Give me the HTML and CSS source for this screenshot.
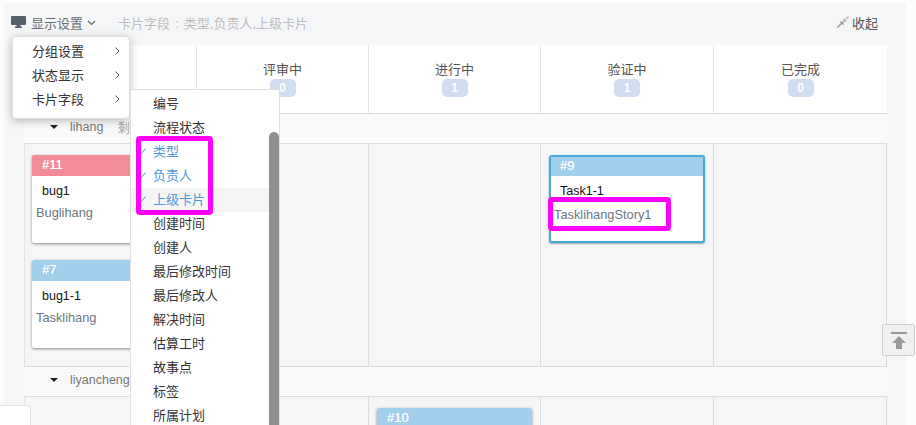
FILE: index.html
```html
<!DOCTYPE html>
<html lang="zh">
<head>
<meta charset="utf-8">
<title>看板</title>
<link rel="stylesheet" href="styles.css">
</head>
<body>
<div class="page">
  <div class="toolbar">
    <svg class="ico-monitor" width="15" height="12" viewBox="0 0 15 12"><path fill="#56616d" d="M1 0h13a1 1 0 0 1 1 1v7a1 1 0 0 1-1 1H9.500v1.500H11V12H4v-1.500h1.500V9H1a1 1 0 0 1-1-1V1a1 1 0 0 1 1-1z"/></svg>
    <span class="display">显示设置</span>
    <svg class="ico-down" width="9" height="6" viewBox="0 0 9 6"><path fill="none" stroke="#666" stroke-width="1.200" d="M1 1l3.500 3.500L8 1"/></svg>
    <span class="summary">卡片字段 : 类型,负责人,上级卡片</span>
    <span class="spacer"></span>
    <svg class="ico-collapse" width="12" height="12" viewBox="0 0 12 12"><path fill="#999" d="M0 11l4-4-1.500-1.500H6.500V9.500L5 8 1 12z"/><path fill="#bbb" d="M12 1L8.500 4.500 10 6H6V2l1.500 1.500L11 0z"/></svg>
    <span class="collapse">收起</span>
  </div>

  <div class="board">
    <div class="head">
      <div class="head-cell"></div>
      <div class="head-cell"><span>评审中</span><b class="count">0</b></div>
      <div class="head-cell"><span>进行中</span><b class="count">1</b></div>
      <div class="head-cell"><span>验证中</span><b class="count">1</b></div>
      <div class="head-cell"><span>已完成</span><b class="count">0</b></div>
    </div>

    <div class="group"><i class="tri"></i><span>lihang</span><span class="rest">剩余</span></div>
    <div class="lane lane-a">
      <div class="col">
        <div class="card"><div class="card-id red">#11</div><div class="card-title">bug1</div><div class="card-meta">Buglihang</div></div>
        <div class="card"><div class="card-id blue">#7</div><div class="card-title">bug1-1</div><div class="card-meta">Tasklihang</div></div>
      </div>
      <div class="col"></div>
      <div class="col"></div>
      <div class="col">
        <div class="card active"><div class="card-id blue">#9</div><div class="card-title">Task1-1</div><div class="card-meta">TasklihangStory1</div></div>
      </div>
      <div class="col"></div>
    </div>

    <div class="group"><i class="tri"></i><span>liyancheng</span></div>
    <div class="lane">
      <div class="col"></div>
      <div class="col"></div>
      <div class="col">
        <div class="card"><div class="card-id blue">#10</div></div>
      </div>
      <div class="col"></div>
      <div class="col"></div>
    </div>
  </div>

  <ul class="menu">
    <li>分组设置<svg class="chev" width="5" height="8" viewBox="0 0 5 8"><path fill="none" stroke="#555" d="M.5.500L4 4 .5 7.500"/></svg></li>
    <li>状态显示<svg class="chev" width="5" height="8" viewBox="0 0 5 8"><path fill="none" stroke="#555" d="M.5.500L4 4 .5 7.500"/></svg></li>
    <li>卡片字段<svg class="chev" width="5" height="8" viewBox="0 0 5 8"><path fill="none" stroke="#555" d="M.5.500L4 4 .5 7.500"/></svg></li>
  </ul>

  <div class="submenu">
    <ul>
      <li>编号</li>
      <li>流程状态</li>
      <li class="on"><svg class="check" width="6" height="6" viewBox="0 0 6 6"><path fill="none" stroke="#4a90d0" d="M.5 4.500l1 1L5.500.5"/></svg>类型</li>
      <li class="on"><svg class="check" width="6" height="6" viewBox="0 0 6 6"><path fill="none" stroke="#4a90d0" d="M.5 4.500l1 1L5.500.5"/></svg>负责人</li>
      <li class="on hover"><svg class="check" width="6" height="6" viewBox="0 0 6 6"><path fill="none" stroke="#4a90d0" d="M.5 4.500l1 1L5.500.5"/></svg>上级卡片</li>
      <li>创建时间</li>
      <li>创建人</li>
      <li>最后修改时间</li>
      <li>最后修改人</li>
      <li>解决时间</li>
      <li>估算工时</li>
      <li>故事点</li>
      <li>标签</li>
      <li>所属计划</li>
    </ul>
    <div class="thumb"></div>
  </div>

  <div class="mark mark-fields"></div>
  <div class="mark mark-card"></div>

  <div class="to-top">
    <svg width="16" height="17" viewBox="0 0 16 17"><path fill="#999" d="M0 0h16v2H0zM8 4l7 7h-4v6H5v-6H1z"/></svg>
  </div>
  <div class="corner"></div>
</div>
</body>
</html>
```

FILE: styles.css
```css
* { box-sizing: border-box; }
html, body { margin: 0; padding: 0; }
body {
  width: 916px;
  height: 425px;
  overflow: hidden;
  background: #fcfcfc;
  font-family: "Liberation Sans", "Noto Sans CJK SC", sans-serif;
  font-size: 13px;
  color: #333;
}
.page {
  position: relative;
  height: 422px;
  margin: 3px 10px 0 4px;
  background: #f5f6f8;
}
.toolbar {
  height: 42px;
  display: flex;
  align-items: center;
  padding: 0 28px 4px 7px;
  color: #666;
}
.ico-monitor { margin-right: 5px; }
.display { color: #6b6f75; }
.ico-down { margin: 2px 0 0 4px; }
.summary { margin-left: 22px; font-size: 13px; color: #bdbdbd; word-spacing: 1.500px; }
.spacer { flex: 1; }
.ico-collapse { margin-right: 3px; }
.collapse { color: #555; }

.board { height: 380px; margin: 0 19px 0 20px; overflow: hidden; }
.head, .lane { display: grid; grid-template-columns: 172px 172px 172px 173px 1fr; }
.head { height: 69px; background: #fff; border-bottom: 1px solid #dcdcdc; }
.head-cell {
  display: flex;
  flex-direction: column;
  align-items: center;
  padding-top: 17px;
  border-left: 1px solid #e4e4e4;
  color: #555;
}
.head-cell:first-child { border-left: 0; }
.head-cell span { line-height: 16px; }
.count {
  width: 26px;
  height: 18px;
  margin-top: 1px;
  border-radius: 5px;
  background: #d0dcef;
  color: #fff;
  font-size: 12px;
  font-weight: bold;
  line-height: 18px;
  text-align: center;
}
.group {
  height: 30px;
  display: flex;
  align-items: center;
  padding: 0 0 3px 26px;
  background: #fafafa;
  border-bottom: 1px solid #dcdcdc;
  color: #777;
  font-size: 12.500px;
}
.tri {
  width: 0;
  height: 0;
  margin-right: 12px;
  border: 4px solid transparent;
  border-top: 4px solid #222;
  border-bottom: 0;
}
.rest { margin-left: 14px; color: #aaa; }
.lane { grid-template-columns: 171px 172px 172px 173px 1fr; border-right: 1px solid #dcdcdc; border-left: 1px solid #e4e4e4; }
.lane-a { height: 223px; border-bottom: 1px solid #dcdcdc; }
.col { padding: 11px 8px 0 8px; border-left: 1px solid #dcdcdc; }
.col:first-child { padding-left: 7px; border-left: 0; }
.card {
  height: 88px;
  margin-bottom: 17px;
  background: #fff;
  border-radius: 2px;
  box-shadow: 0 1px 3px rgba(0, 0, 0, .45);
  overflow: hidden;
}
.card.active { border: 2px solid #4aa9d6; border-radius: 3px; box-shadow: 0 1px 2px rgba(0, 0, 0, .35); }
.card-id {
  height: 21px;
  padding-left: 10px;
  color: #fff;
  font-size: 13px;
  line-height: 19px;
  text-shadow: 0 0 .4px #fff;
}
.active .card-id { height: 19px; line-height: 17px; padding-left: 9px; }
.red { background: #f28c99; }
.blue { background: #a1cfec; }
.card-title { padding: 7px 0 0 10px; color: #111; font-size: 12.500px; line-height: 16px; }
.active .card-title { padding: 7px 0 0 9px; }
.card-meta { padding: 6px 0 0 4px; color: #6c7784; font-size: 12.800px; line-height: 16px; }
.active .card-meta { padding: 8px 0 0 3px; }

.menu, .submenu ul { list-style: none; margin: 0; padding: 0; }
.menu {
  position: absolute;
  left: 8px;
  top: 33px;
  width: 118px;
  height: 83px;
  padding-top: 4px;
  background: #fff;
  border: 1px solid #e0e0e0;
  border-radius: 4px;
  box-shadow: 0 2px 8px rgba(0, 0, 0, .25);
}
.menu li {
  height: 24px;
  display: flex;
  align-items: center;
  justify-content: space-between;
  padding: 0 9px 2px 19px;
  line-height: 24px;
  color: #333;
}
.chev { margin-top: -3px; }
.submenu {
  position: absolute;
  left: 126px;
  top: 86px;
  width: 150px;
  height: 336px;
  background: #fff;
  border: 1px solid #e0e0e0;
  border-bottom: 0;
  overflow: hidden;
}
.submenu ul { padding-top: 2px; }
.submenu li {
  position: relative;
  height: 24px;
  padding-left: 22px;
  line-height: 24px;
  color: #333;
}
.submenu li.on { color: #4f97d6; }
.submenu li.hover { background: #f5f5f5; }
.check { position: absolute; left: 9px; top: 8px; }
.thumb {
  position: absolute;
  right: 0;
  top: 42px;
  width: 10px;
  height: 300px;
  border-radius: 5px 5px 0 0;
  background: #909090;
}
.mark {
  position: absolute;
  border: 5px solid #f0f;
  border-radius: 4px;
}
.mark-fields { left: 132px; top: 133px; width: 77px; height: 79px; }
.mark-card { left: 544px; top: 194px; width: 123px; height: 34px; }
.to-top {
  position: absolute;
  left: 878px;
  top: 321px;
  width: 33px;
  height: 32px;
  display: flex;
  align-items: center;
  justify-content: center;
  background: #f0f0f0;
  border: 1px solid #d0d0d0;
  border-radius: 2px;
}
.corner {
  position: absolute;
  left: -4px;
  top: 402px;
  width: 31px;
  height: 20px;
  background: #fff;
  border: 1px solid #e4e4e4;
  border-bottom: 0;
  border-left: 0;
  border-radius: 0 4px 0 0;
}
```
